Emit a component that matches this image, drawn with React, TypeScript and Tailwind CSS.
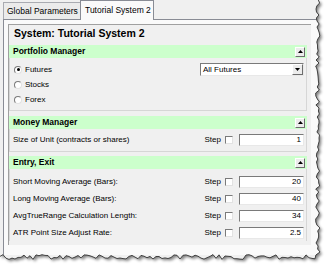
import React from "react";

// jagged "torn paper" outline for the screenshot crop
const torn = (() => {
    let seed = 11;
    const rnd = () => {
        seed = (seed * 9301 + 49297) % 233280;
        return seed / 233280;
    };
    const pts: string[] = [];
    for (let y = 0; y <= 256; y += 3) pts.push(`${(315.5 + rnd() * 4.5).toFixed(1)},${y}`);
    for (let x = 315; x >= 0; x -= 3) pts.push(`${x},${(254.5 + rnd() * 5).toFixed(1)}`);
    return pts;
})();

const Radio = ({ checked, label }: { checked?: boolean; label: string }) => (
    <div className="h-[15px] flex items-center">
        <span className="w-[8px] h-[8px] rounded-full bg-white border border-t-[#7a7a7a] border-l-[#7a7a7a] border-b-[#e2e2e2] border-r-[#e2e2e2] flex items-center justify-center">
            {checked && <span className="w-[3px] h-[3px] rounded-full bg-black" />}
        </span>
        <span className="ml-[3px]">{label}</span>
    </div>
);

const CollapseButton = () => (
    <span className="w-[10px] h-[10px] bg-[#ececec] border border-t-white border-l-white border-b-[#6d6d6d] border-r-[#6d6d6d] flex items-center justify-center">
        <svg width="5" height="3" viewBox="0 0 5 3">
            <path d="M2.5 0L5 3H0Z" fill="#000" />
        </svg>
    </span>
);

const Header = ({ title }: { title: string }) => (
    <div className="h-[13px] bg-[#ccffcc] flex items-center justify-between pl-[4px] pr-[2px] font-bold text-[8.5px]">
        <span>{title}</span>
        <CollapseButton />
    </div>
);

const ParamRow = ({ label, value }: { label: string; value: string }) => (
    <div className="h-[17px] flex items-center">
        <span className="flex-1">{label}</span>
        <span>Step</span>
        <span className="ml-[4px] w-[8px] h-[8px] bg-white border border-t-[#7a7a7a] border-l-[#7a7a7a] border-b-[#e2e2e2] border-r-[#e2e2e2]" />
        <span className="ml-[6px] w-[65px] h-[12px] bg-white border border-t-[#7a7a7a] border-l-[#7a7a7a] border-b-[#e8e8e8] border-r-[#e8e8e8] flex items-center justify-end pr-[2px]">
            {value}
        </span>
    </div>
);

export default function App() {
    return (
        <div className="relative w-[330px] h-[270px] overflow-hidden bg-white font-['Liberation_Sans',Arial,sans-serif] text-[8px] text-black">
            <div className="w-[330px] h-[270px] bg-[#f0f0f0]">
                {/* Tabs */}
                <div className="h-[19px] flex items-end pl-[3px] text-[8.5px] whitespace-nowrap">
                    <div className="w-[77px] h-[17px] border border-b-0 border-r-0 border-[#a9abb1] bg-[#ebebeb] flex items-center pl-[3px]">
                        Global Parameters
                    </div>
                    <div className="relative z-10 -mb-px w-[74px] h-[20px] border border-b-0 border-[#898c95] bg-[#fafafa] flex items-center pl-[4px] pb-[1px]">
                        Tutorial System 2
                    </div>
                </div>

                {/* Tab page */}
                <div className="ml-[3px] h-[236px] border-t border-l border-[#898c95] bg-[#fafafa] pl-[4px] pt-[4px]">
                    <div className="w-[303px] h-[221px] border-t border-l border-[#a0a0a0] bg-[#f0f0f0] pr-[4px]">
                        <div className="h-[20px] pl-[5px] pt-[2px] font-bold text-[10.5px] leading-[12px]">
                            System: Tutorial System 2
                        </div>

                        {/* Portfolio Manager */}
                        <Header title="Portfolio Manager" />
                        <div className="h-[53px] mb-[5px] border-l border-r border-b border-[#d6d6d6] pl-[4px] pt-[4px] pr-[2px] flex justify-between">
                            <div className="flex flex-col">
                                <Radio checked label="Futures" />
                                <Radio label="Stocks" />
                                <Radio label="Forex" />
                            </div>
                            <div className="mt-[1px] w-[104px] h-[13px] bg-white border border-t-[#7a7a7a] border-l-[#7a7a7a] border-b-[#e8e8e8] border-r-[#e8e8e8] flex items-center justify-between pl-[2px]">
                                <span>All Futures</span>
                                <span className="w-[11px] h-[11px] bg-[#ececec] border border-t-white border-l-white border-b-[#6d6d6d] border-r-[#6d6d6d] flex items-center justify-center">
                                    <svg width="5" height="3" viewBox="0 0 5 3">
                                        <path d="M0 0H5L2.5 3Z" fill="#000" />
                                    </svg>
                                </span>
                            </div>
                        </div>

                        {/* Money Manager */}
                        <Header title="Money Manager" />
                        <div className="h-[23px] mb-[4px] border-l border-r border-b border-[#d6d6d6] pl-[3px] pr-[2px] pt-[2px]">
                            <ParamRow label="Size of Unit (contracts or shares)" value="1" />
                        </div>

                        {/* Entry, Exit */}
                        <Header title="Entry, Exit" />
                        <div className="border-l border-r border-[#d6d6d6] pl-[3px] pr-[2px] pt-[4px]">
                            <ParamRow label="Short Moving Average (Bars):" value="20" />
                            <ParamRow label="Long Moving Average (Bars):" value="40" />
                            <ParamRow label="AvgTrueRange Calculation Length:" value="34" />
                            <ParamRow label="ATR Point Size Adjust Rate:" value="2.5" />
                        </div>
                    </div>
                </div>
            </div>

            {/* torn edge + shadow */}
            <svg className="absolute inset-0 pointer-events-none" width="330" height="270">
                <defs>
                    <clipPath id="outside">
                        <path clipRule="evenodd" d={`M0 0H330V270H0Z M0 0L${torn.join("L")}L0 257Z`} />
                    </clipPath>
                    <filter id="soft" x="-10%" y="-10%" width="120%" height="120%">
                        <feGaussianBlur stdDeviation="1.4" />
                    </filter>
                </defs>
                <g clipPath="url(#outside)">
                    <rect width="330" height="270" fill="#fff" />
                    <polygon
                        points={`0,0 ${torn.join(" ")} 0,257`}
                        fill="#000"
                        opacity="0.5"
                        transform="translate(2,2)"
                        filter="url(#soft)"
                    />
                </g>
                <polyline points={torn.join(" ")} fill="none" stroke="#333" strokeWidth="0.9" />
            </svg>
        </div>
    );
}
